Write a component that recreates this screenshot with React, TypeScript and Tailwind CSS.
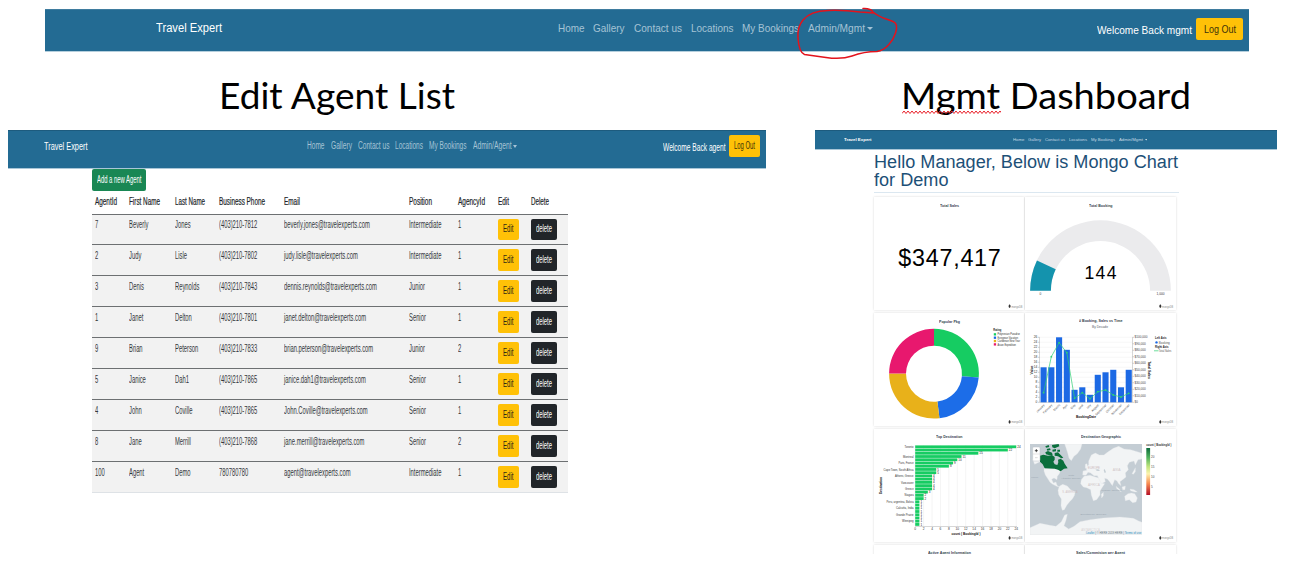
import { useLayoutEffect, useRef, type ReactNode } from 'react';

/** Single line of text squeezed or stretched horizontally to an exact width. */
function Fit({ w, className = '', children }: { w: number; className?: string; children: ReactNode }) {
  const ref = useRef<HTMLSpanElement>(null);
  useLayoutEffect(() => {
    const el = ref.current;
    if (!el) return;
    el.style.transform = 'none';
    const natural = el.getBoundingClientRect().width;
    if (natural > 0) el.style.transform = `scaleX(${w / natural})`;
  }, [w, children]);
  return (
    <span className={`block shrink-0 text-left ${className}`} style={{ width: w }}>
      <span ref={ref} className="inline-block origin-left whitespace-nowrap">
        {children}
      </span>
    </span>
  );
}

function Caret({ className }: { className: string }) {
  return (
    <svg viewBox="0 0 6 3" className={className} preserveAspectRatio="none">
      <path d="M0 0H6L3 3Z" fill="currentColor" />
    </svg>
  );
}

function NavLinks({ items, className }: { items: [string, number][]; className: string }) {
  return (
    <nav className={`flex items-center text-[#a5c3d5] ${className}`}>
      {items.map(([label, w]) => (
        <Fit key={label} w={w}>
          {label}
        </Fit>
      ))}
    </nav>
  );
}

function TopBar() {
  return (
    <header className="mt-[9px] ml-[45px] flex h-[42.5px] w-[1204px] shrink-0 border-t border-b border-t-[#3f7c9f] border-b-[#b5cfdd] bg-[#236b93] text-[12px] leading-[14px]">
      <Fit w={66} className="mt-[11px] ml-[111px] text-white">Travel Expert</Fit>
      <div className="mt-[11px] ml-[335.5px] flex h-[14px] items-center text-[#a5c3d5]">
        <NavLinks
          className="gap-[9px] text-[11.5px]"
          items={[['Home', 26.5], ['Gallery', 31.5], ['Contact us', 48], ['Locations', 42.5], ['My Bookings', 57], ['Admin/Mgmt', 57]]}
        />
        <Caret className="ml-[2px] h-[3px] w-[6px]" />
      </div>
      <Fit w={95} className="mt-[13px] ml-[224px] text-[11.5px] text-white">Welcome Back mgmt</Fit>
      <button className="mt-[7.5px] ml-[4px] flex h-[22px] w-[47px] items-center justify-center rounded-[2px] bg-[#ffc107] text-[11.5px] text-[#3c3209]">
        <Fit w={32}>Log Out</Fit>
      </button>
    </header>
  );
}

type Agent = [string, string, string, string, string, string, string];

const agents: Agent[] = [
  ['7', 'Beverly', 'Jones', '(403)210-7812', 'beverly.jones@travelexperts.com', 'Intermediate', '1'],
  ['2', 'Judy', 'Lisle', '(403)210-7802', 'judy.lisle@travelexperts.com', 'Intermediate', '1'],
  ['3', 'Denis', 'Reynolds', '(403)210-7843', 'dennis.reynolds@travelexperts.com', 'Junior', '1'],
  ['1', 'Janet', 'Delton', '(403)210-7801', 'janet.delton@travelexperts.com', 'Senior', '1'],
  ['9', 'Brian', 'Peterson', '(403)210-7833', 'brian.peterson@travelexperts.com', 'Junior', '2'],
  ['5', 'Janice', 'Dah1', '(403)210-7865', 'janice.dah1@travelexperts.com', 'Senior', '1'],
  ['4', 'John', 'Coville', '(403)210-7865', 'John.Coville@travelexperts.com', 'Senior', '1'],
  ['8', 'Jane', 'Merrill', '(403)210-7868', 'jane.merrill@travelexperts.com', 'Senior', '2'],
  ['100', 'Agent', 'Demo', '780780780', 'agent@travelexperts.com', 'Intermediate', '1'],
];

const headings: [string, number][] = [
  ['AgentId', 22], ['First Name', 31], ['Last Name', 30], ['Business Phone', 46], ['Email', 16],
  ['Position', 23], ['AgencyId', 27], ['Edit', 11], ['Delete', 18],
];

const tracks = 'grid grid-cols-[34.5px_45.5px_44.5px_65px_125px_48.5px_40.5px_32.5px_1fr] pl-[2.5px]';

function AgentPanel() {
  return (
    <section className="w-[758px] shrink-0">
      <header className="flex h-[39px] border-t border-b border-t-[#1d5b7e] border-b-[#a9c6d7] bg-[#236b93] text-[10.5px] leading-[14px]">
        <Fit w={43.5} className="mt-[8px] ml-[35.5px] text-white">Travel Expert</Fit>
        <div className="mt-[8px] ml-[220px] flex h-[14px] items-center text-[#a5c3d5]">
          <NavLinks
            className="gap-[6px] text-[10px]"
            items={[['Home', 17.5], ['Gallery', 21], ['Contact us', 31.5], ['Locations', 28], ['My Bookings', 37.5], ['Admin/Agent', 38.5]]}
          />
          <Caret className="ml-[1.5px] h-[3px] w-[4px]" />
        </div>
        <Fit w={62.5} className="mt-[10px] ml-[146.5px] text-[10px] text-white">Welcome Back agent</Fit>
        <button className="mt-[4px] ml-[3.5px] flex h-[22px] w-[31px] items-center justify-center rounded-[2px] bg-[#ffc107] text-[10px] text-[#3c3209]">
          <Fit w={21}>Log Out</Fit>
        </button>
      </header>
      <div className="ml-[84px] w-[475.5px] text-[10px] leading-[12px] text-[#33373b]">
        <button className="flex h-[21.5px] w-[54px] items-center justify-center rounded-[2px] bg-[#198754] text-white">
          <Fit w={44.5}>Add a new Agent</Fit>
        </button>
        <div className={`${tracks} h-[23px] pt-[5px] text-[#212529]`}>
          {headings.map(([h, w]) => (
            <Fit key={h} w={w} className="[-webkit-text-stroke:0.2px_#212529]">{h}</Fit>
          ))}
        </div>
        {agents.map((row) => (
          <div key={row[0]} className={`${tracks} h-[30.95px] border-t border-[#6d7072] bg-[#f2f2f2]`}>
            {row.map((cell, i) => (
              <span key={i} className="mt-[4.5px] h-[12px] w-max origin-left scale-x-[0.583] whitespace-nowrap">
                {cell}
              </span>
            ))}
            <button className="mt-[4px] flex h-[21.5px] w-[20.5px] items-center justify-center rounded-[2px] bg-[#ffc107] text-[#2e2a14]">
              <Fit w={10.5}>Edit</Fit>
            </button>
            <button className="mt-[4px] flex h-[21.5px] w-[26px] items-center justify-center rounded-[2px] bg-[#212529] text-white">
              <Fit w={16}>delete</Fit>
            </button>
          </div>
        ))}
        <div className="h-px bg-[#dee2e6]" />
      </div>
    </section>
  );
}

/* ---------- dashboard ---------- */

function Tx(p: {
  x: number; y: number; w?: number; s?: number; fill?: string; anchor?: 'start' | 'middle' | 'end'; rot?: number; bold?: boolean; spaced?: boolean; children: ReactNode;
}) {
  const { x, y, w, s = 3, fill = '#555', anchor = 'start', rot, bold, spaced } = p;
  return (
    <text
      x={x}
      y={y + s * 0.36}
      fontSize={s}
      fill={fill}
      textAnchor={anchor}
      fontWeight={bold ? 700 : 400}
      textLength={w}
      lengthAdjust={spaced ? 'spacing' : 'spacingAndGlyphs'}
      transform={rot ? `rotate(${rot} ${x} ${y})` : undefined}
    >
      {p.children}
    </text>
  );
}

function Mark({ x, y }: { x: number; y: number }) {
  return (
    <g>
      <path d={`M${x} ${y - 2}c1.5 1.4 1.3 2.8 0 3.8c-1.3-1-1.5-2.4 0-3.8Z`} fill="#333" />
      <Tx x={x + 1.8} y={y + 0.3} s={3} w={11} fill="#8a8a8a">mongoDB</Tx>
    </g>
  );
}

function arc(cx: number, cy: number, R: number, r: number, a0: number, a1: number) {
  const pt = (rad: number, a: number) => {
    const t = ((a - 90) * Math.PI) / 180;
    return `${(cx + rad * Math.cos(t)).toFixed(2)} ${(cy + rad * Math.sin(t)).toFixed(2)}`;
  };
  const big = a1 - a0 > 180 ? 1 : 0;
  return `M${pt(R, a0)}A${R} ${R} 0 ${big} 1 ${pt(R, a1)}L${pt(r, a1)}A${r} ${r} 0 ${big} 0 ${pt(r, a0)}Z`;
}

function Card({ title, w, viewBox, pad = 'pt-[6px]', children }: { title: string; w: number; viewBox: string; pad?: string; children?: ReactNode }) {
  return (
    <article className="grid overflow-hidden bg-white shadow-[0_0_2px_rgba(0,0,0,0.16)]">
      <svg viewBox={viewBox} className="col-start-1 row-start-1 h-full w-full" preserveAspectRatio="none">
        {children}
      </svg>
      <h3 className={`col-start-1 row-start-1 flex justify-center text-[4.2px] leading-[5px] font-bold text-[#33424c] ${pad}`}>
        <Fit w={w}>{title}</Fit>
      </h3>
    </article>
  );
}

const bookings = [14, 14, 26, 21, 5, 6, 3, 11, 12, 13, 6, 13];
const salesY = [392.7, 356.7, 342.7, 352.7, 398.3, 392.7, 398.7, 391.7, 390, 395, 397, 393.3];
const months = ['January', 'February', 'March', 'April', 'May', 'June', 'July', 'August', 'September', 'October', 'November', 'December'];

function BookingChart() {
  const step = 7.74;
  const cx = (i: number) => 1043.6 + i * step;
  return (
    <g>
      <Tx x={1100} y={326.3} s={3.4} w={16} anchor="middle" fill="#56626b">By Decade</Tx>
      {Array.from({ length: 14 }, (_, i) => (
        <g key={i}>
          <path d={`M1039.5 ${402.3 - i * 5}H1132.5`} stroke="#ececec" strokeWidth=".4" />
          <path d={`M1038 ${402.3 - i * 5}H1039.5`} stroke="#888" strokeWidth=".4" />
          <Tx x={1037.3} y={402.3 - i * 5} s={3.2} anchor="end" fill="#333">{i * 2}</Tx>
        </g>
      ))}
      {Array.from({ length: 11 }, (_, i) => (
        <g key={i}>
          <path d={`M1132.5 ${402.3 - i * 6.5}H1134`} stroke="#888" strokeWidth=".4" />
          <Tx x={1134.5} y={402.3 - i * 6.5} s={3.2} w={i === 0 ? 3.3 : i === 10 ? 13 : 11.3} fill="#444">{i === 0 ? '$0' : `$${i * 10},000`}</Tx>
        </g>
      ))}
      <path d="M1039.5 337.3V402.3H1132.5V337.3" fill="none" stroke="#999" strokeWidth=".4" />
      {bookings.map((v, i) => (
        <rect key={i} x={cx(i) - 3.05} y={402.3 - v * 2.5} width={6.1} height={v * 2.5} fill="#1c69e4" />
      ))}
      <polyline points={salesY.map((y, i) => `${cx(i)},${y}`).join(' ')} fill="none" stroke="#2fd074" strokeWidth=".7" />
      {salesY.map((y, i) => (
        <circle key={i} cx={cx(i)} cy={y} r=".9" fill="#2fd074" />
      ))}
      {months.map((m, i) => (
        <Tx key={m} x={cx(i) + 0.5} y={404.6} s={3} anchor="end" rot={-45} fill="#444">{m}</Tx>
      ))}
      <Tx x={1031.5} y={370} s={3.4} bold anchor="middle" rot={-90} fill="#111">Value</Tx>
      <Tx x={1149.5} y={370} s={3.4} bold anchor="middle" rot={90} fill="#111">Total Sales</Tx>
      <Tx x={1086} y={417} s={3.4} w={20} bold anchor="middle" fill="#111">BookingDate</Tx>
      <Tx x={1155} y={338.2} s={3.2} w={11.5} bold fill="#222">Left Axis</Tx>
      <circle cx="1156.5" cy="342.4" r="1.2" fill="#1c69e4" />
      <Tx x={1158.8} y={342.4} s={3.2} w={11} fill="#555">Booking</Tx>
      <Tx x={1155} y={346.6} s={3.2} w={13.5} bold fill="#222">Right Axis</Tx>
      <path d="M1154 350.8H1158.5" stroke="#2fd074" strokeWidth=".7" />
      <Tx x={1158.8} y={350.8} s={3.2} w={12.5} fill="#555">Total Sales</Tx>
      <Mark x={1160.3} y={422} />
    </g>
  );
}

const counts = [24, 22, 15, 11, 10, 9, 8, 5, 5, 4, 4, 4, 4, 4, 3, 2, 2, 1, 1, 1, 1, 1, 1, 1, 1];
const places: [number, string, number][] = [
  [0, 'Toronto', 9], [3, 'Montreal', 10.5], [5, 'Paris, France', 15], [7, 'Cape Town, South Africa', 30], [9, 'Athens, Greece', 18.5],
  [11, 'Vancouver', 12.5], [13, 'Greece', 8.5], [15, 'Niagara', 9], [17, 'Peru, argentina, Bolivia', 27], [19, 'Calcutta, India', 17.5],
  [21, 'Grande Prairie', 17.5], [23, 'Winnipeg', 11.5],
];

function DestinationChart() {
  const u = 4.21;
  const y = (i: number) => 446.8 + i * 3.235;
  return (
    <g>
      {Array.from({ length: 13 }, (_, i) => (
        <g key={i}>
          <path d={`M${915.2 + i * 2 * u} 445V526.5`} stroke="#e2e2e2" strokeWidth=".4" />
          <Tx x={915.2 + i * 2 * u} y={529.3} s={3.2} anchor="middle" fill="#333">{i * 2}</Tx>
        </g>
      ))}
      <path d="M915.2 526.5H1017" stroke="#999" strokeWidth=".4" />
      {counts.map((c, i) => (
        <g key={i}>
          <rect x={915.2} y={y(i) - 1.4} width={c * u} height={2.8} fill="#16cc62" />
          <Tx x={916.2 + c * u} y={y(i)} s={3} fill="#222">{c}</Tx>
        </g>
      ))}
      {places.map(([i, name, w]) => (
        <Tx key={name} x={913.6} y={y(i)} s={3.2} w={w} anchor="end" fill="#333">{name}</Tx>
      ))}
      <Tx x={881} y={485.5} s={3.4} w={17} bold anchor="middle" rot={-90} fill="#111">Destination</Tx>
      <Tx x={966} y={533.6} s={3.4} w={29} bold anchor="middle" fill="#111">count ( BookingId )</Tx>
      <Mark x={1009.6} y={538} />
    </g>
  );
}

const land = [
  '38,98 42,88 60,86 60,104 52,108 44,112',
  '72,124 112,124 122,130 118,140 112,148 111,158 102,153 95,157 100,168 108,165 111,175 118,180 110,178 98,172 90,166 84,156 76,144 72,132',
  '118,178 128,172 142,177 152,188 166,194 163,206 157,216 149,224 141,234 133,248 127,250 123,236 124,216 116,203 114,190',
  '134,51 186,51 182,66 172,80 162,88 154,101 147,94 143,78 138,62',
  '184,158 192,148 210,145 226,150 240,154 246,168 254,170 246,182 240,192 240,204 230,218 220,221 214,204 212,188 200,182 190,180 182,170',
  '188,144 189,132 200,130 198,120 206,114 206,102 214,84 226,78 238,84 252,84 262,76 280,64 296,58 312,66 332,68 352,74 366,79 366,96 354,98 346,114 342,102 328,106 322,116 325,128 316,138 318,150 308,158 300,164 303,176 296,170 291,162 284,158 277,176 269,164 262,156 254,154 256,164 244,170 236,154 232,146 222,146 212,138 204,136 198,145',
  '314,208 324,200 334,198 344,200 352,213 348,225 338,227 328,218 316,221',
  '288,178 298,186 304,194 300,193 290,184',
  '306,180 316,177 315,188 308,188',
  '330,186 342,188 352,195 344,195 332,191',
  '196,112 201,110 203,122 196,124',
  '336,140 342,130 346,122 346,134 340,142',
  '244,202 250,196 250,206 245,213',
  '30,302 60,289 90,295 108,298 124,284 134,264 142,262 138,280 132,296 146,306 162,298 180,284 210,278 250,273 300,270 340,274 356,282 366,286 366,324 30,324',
];

const canada = [
  '60,86 70,83 84,86 96,84 104,90 104,98 100,104 104,112 112,114 115,106 114,98 122,95 130,101 134,110 143,124 132,125 122,133 114,128 104,125 74,124 68,112 60,104',
  '76,76 84,72 96,77 98,84 86,84 78,82',
  '104,78 114,76 122,84 130,92 124,94 114,88 104,86',
  '80,66 90,64 92,69 82,71',
  '97,68 108,66 108,73 98,74',
  '76,58 86,54 88,60 78,62',
  '96,54 116,51 118,58 104,64 97,61',
  '112,68 120,68 120,74 112,74',
];

function GeoChart() {
  return (
    <g>
      <defs>
        <linearGradient id="scale" x1="0" y1="0" x2="0" y2="1">
          <stop offset="0" stopColor="#0b6b3a" />
          <stop offset=".2" stopColor="#4fb25d" />
          <stop offset=".4" stopColor="#c3e57e" />
          <stop offset=".55" stopColor="#fdf3ae" />
          <stop offset=".75" stopColor="#f98e52" />
          <stop offset="1" stopColor="#b50f26" />
        </linearGradient>
        <clipPath id="world">
          <rect x="30" y="51" width="336" height="272" />
        </clipPath>
      </defs>
      <g transform="translate(1020 427) scale(.33333)">
        <g clipPath="url(#world)">
          <rect x="30" y="51" width="336" height="272" fill="#c4cdd4" />
          {land.map((p) => (
            <polygon key={p} points={p} fill="#f2f4f5" stroke="#e4e8ea" strokeWidth="1" strokeLinejoin="round" />
          ))}
          {canada.map((p) => (
            <polygon key={p} points={p} fill="#0a6f3c" />
          ))}
          <path d="M226 128q8-4 14 2q-6 5-14-2M254 126l4 10l-4 2l-3-9Z" fill="#c4cdd4" />
          <rect x="196" y="313" width="170" height="10" fill="#e8ecef" />
        </g>
        <rect x="38" y="60" width="22" height="42" rx="3" fill="#fff" stroke="#bcc3c9" strokeWidth="1.5" />
        <path d="M38 81H60" stroke="#ccc" strokeWidth="1.5" />
        <path d="M44.5 71H53.5M49 66.5V75.5" stroke="#222" strokeWidth="2.4" />
        <path d="M45 92H53" stroke="#ccc" strokeWidth="2" />
        <g opacity=".75">
          <Tx x={154} y={144} s={7} anchor="middle" fill="#8d9aa6">North</Tx>
          <Tx x={152} y={154} s={7} w={58} anchor="middle" fill="#8d9aa6">Atlantic Ocean</Tx>
          <Tx x={274} y={190} s={7} w={60} anchor="middle" fill="#8d9aa6">Indian Ocean</Tx>
          <Tx x={220} y={262} s={7} w={78} anchor="middle" fill="#8d9aa6">Southern Ocean</Tx>
          <Tx x={44} y={150} s={7} anchor="middle" fill="#8d9aa6">Pacific</Tx>
          <Tx x={222} y={123} s={8} w={36} anchor="middle" fill="#c0a9ac">EUROPE</Tx>
          <Tx x={290} y={129} s={8} w={24} anchor="middle" fill="#c9bcbe">ASIA</Tx>
          <Tx x={222} y={175} s={8} w={36} anchor="middle" fill="#c9bcbe">AFRICA</Tx>
          <Tx x={150} y={196} s={8} w={46} anchor="middle" fill="#c9b5b8">S. AMERICA</Tx>
          <Tx x={212} y={309} s={8} w={56} anchor="middle" fill="#d3cccd">ANTARCTICA</Tx>
        </g>
        <Tx x={199} y={318} s={8} w={24} fill="#2b8fc0">Leaflet</Tx>
        <Tx x={226} y={318} s={8} w={86} fill="#6d7880">| © HERE 2019 HERE |</Tx>
        <Tx x={314} y={318} s={8} w={50} fill="#2b8fc0">Terms of use</Tx>
      </g>
      <Tx x={1146.3} y={445.3} s={3} w={25} bold fill="#333">count ( BookingId )</Tx>
      <rect x="1146.3" y="448" width="3.8" height="47" fill="url(#scale)" />
      {[20, 15, 10, 5].map((n, i) => (
        <Tx key={n} x={1151} y={456.5 + i * 10.2} s={3} fill="#444">{n}</Tx>
      ))}
      <Mark x={1160.3} y={538} />
    </g>
  );
}

const packages: [string, string, number][] = [
  ['#16cc62', 'Polynesian Paradise', 22.5], ['#1c69e4', 'European Vacation', 20.5], ['#e8b11a', 'Caribbean New Year', 22.5], ['#e8186e', 'Asian Expedition', 18.5],
];

function Dashboard() {
  return (
    <section className="h-[424px] w-[462px] shrink-0 overflow-hidden">
      <header className="flex h-[20px] border-t border-b border-t-[#1d5b7e] border-b-[#a9c6d7] bg-[#236b93] text-[4.3px] leading-[6px]">
        <Fit w={27.5} className="mt-[6px] ml-[28.5px] font-bold text-white">Travel Expert</Fit>
        <div className="mt-[6px] ml-[141.5px] flex h-[6px] items-center text-[#c4d8e4]">
          <NavLinks
            className="gap-[4px] text-[#c4d8e4]"
            items={[['Home', 11.5], ['Gallery', 13], ['Contact us', 20], ['Locations', 18], ['My Bookings', 24], ['Admin/Mgmt', 24]]}
          />
          <Caret className="ml-[1.5px] h-[1.5px] w-[2.5px]" />
        </div>
      </header>
      <div className="ml-[59px] w-[305px]">
        <h1 className="h-[43px] border-b border-[#dbe7f0] pt-[3px] text-[18px] leading-[18px] text-[#1d5077]">
          <Fit w={304}>Hello Manager, Below is Mongo Chart</Fit>
          <Fit w={74.5}>for Demo</Fit>
        </h1>
        <div className="mt-[4px] grid w-[302px] auto-rows-[113px] grid-cols-[150px_151px] gap-x-px gap-y-[3px]">
          <Card title="Total Sales" w={19} viewBox="874 197 150 113">
            <Tx x={898.3} y={257.4} s={23.3} w={102.5} spaced fill="#000">$347,417</Tx>
            <Mark x={1009.6} y={306.2} />
          </Card>
          <Card title="Total Booking" w={23.5} viewBox="1025 197 151 113">
            <path d={arc(1100.5, 290.7, 70.4, 49.6, -90, 90)} fill="#ebebed" />
            <path d={arc(1100.5, 290.7, 70.4, 49.6, -90, -64.5)} fill="#1493ad" />
            <Tx x={1084.5} y={273} s={17.6} w={32} spaced fill="#000">144</Tx>
            <Tx x={1040.5} y={293.8} s={3.2} anchor="middle" fill="#333">0</Tx>
            <Tx x={1160.5} y={293.8} s={3.2} anchor="middle" fill="#333">1,000</Tx>
            <Mark x={1160.3} y={306.2} />
          </Card>
          <Card title="Popular Pkg" w={21} viewBox="874 313 150 113" pad="pt-[5.5px]">
            <path d={arc(934, 373.7, 44.9, 28, 0, 95)} fill="#16cc62" />
            <path d={arc(934, 373.7, 44.9, 28, 95, 173)} fill="#1c6de8" />
            <path d={arc(934, 373.7, 44.9, 28, 173, 270.3)} fill="#e8b11a" />
            <path d={arc(934, 373.7, 44.9, 28, 270.3, 360)} fill="#e8186e" />
            <Tx x={993.3} y={330.2} s={3.2} w={8} bold fill="#222">Rating</Tx>
            {packages.map(([c, name, w], i) => (
              <g key={name}>
                <rect x={993.8} y={333.2 + i * 3.35} width={2.3} height={2.3} fill={c} />
                <Tx x={997.5} y={334.4 + i * 3.35} s={3} w={w} fill="#333">{name}</Tx>
              </g>
            ))}
            <Mark x={1009.6} y={422} />
          </Card>
          <Card title="# Booking, Sales vs Time" w={43.5} viewBox="1025 313 151 113" pad="pt-[5px]">
            <BookingChart />
          </Card>
          <Card title="Top Destination" w={26.5} viewBox="874 429 150 113" pad="pt-[5px]">
            <DestinationChart />
          </Card>
          <Card title="Destination Geographic" w={40} viewBox="1025 429 151 113" pad="pt-[5px]">
            <GeoChart />
          </Card>
          <Card title="Active Agent Information" w={43} viewBox="874 545 150 113" pad="pt-[4.5px]" />
          <Card title="Sales/Commision per Agent" w={49} viewBox="1025 545 151 113" pad="pt-[4.5px]" />
        </div>
      </div>
    </section>
  );
}

const squiggle = 'M0 3.5' + Array.from({ length: 25 }, () => 'l2 -2.5l2 2.5').join('');

export default function App() {
  return (
    <main className="relative flex h-[581px] w-[1292px] flex-col overflow-hidden bg-white font-['Liberation_Sans',Arial,sans-serif]">
      <TopBar />
      <div className="flex h-[78.5px] shrink-0 pt-[19px] pl-[219px] font-['Lato',sans-serif] text-[36.5px] leading-[48px] text-black">
        <Fit w={236}>Edit Agent List</Fit>
        <div className="relative ml-[446px]">
          <Fit w={290}>Mgmt Dashboard</Fit>
          <svg viewBox="0 0 99 4" className="absolute top-[39px] left-[1px] h-[4px] w-[99px]">
            <path d={squiggle} fill="none" stroke="#e8202a" strokeWidth="1" />
          </svg>
        </div>
      </div>
      <div className="flex gap-[49px] pl-[8px]">
        <AgentPanel />
        <Dashboard />
      </div>
      <svg viewBox="790 0 114 66" className="absolute top-0 left-[790px] h-[66px] w-[114px]">
        <path
          d="M863 8.500C868 8 873 10 873 13C869 13 866 12 860 12C852 11 840 10 828 10.5C814 11 807 15 803 20C798 26 797.5 32 798 38C798.5 45 800 53 804.500 54.500C812 55.500 819 56.500 826 57.500C836 59 845 58.500 852 56C860 53 867 51.500 877 51.500C886 50 893 41 895.500 33C897.500 27 897 23 893 21.500C886 18.500 879 17.500 873 12"
          fill="none"
          stroke="#e3131c"
          strokeWidth="1.500"
          strokeLinecap="round"
          strokeLinejoin="round"
        />
      </svg>
    </main>
  );
}
